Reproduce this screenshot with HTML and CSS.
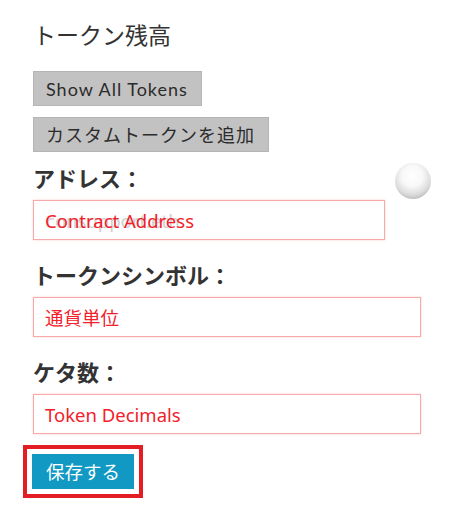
FILE: index.html
```html
<!DOCTYPE html>
<html lang="ja">
<head>
<meta charset="utf-8">
<title>トークン残高</title>
<link rel="stylesheet" href="styles.css">
</head>
<body>
<div class="page">
  <h1 class="title">トークン残高</h1>
  <div class="actions">
    <button class="btn-gray">Show All Tokens</button>
    <button class="btn-gray">カスタムトークンを追加</button>
  </div>
  <div class="knob"></div>
  <div class="field first">
    <label class="label">アドレス：</label>
    <div class="input narrow">
      <span class="ghost">consupport.eth</span>
      <span class="value">Contract Address</span>
    </div>
  </div>
  <div class="field">
    <label class="label">トークンシンボル：</label>
    <div class="input"><span class="value">通貨単位</span></div>
  </div>
  <div class="field">
    <label class="label">ケタ数：</label>
    <div class="input"><span class="value">Token Decimals</span></div>
  </div>
  <div class="highlight">
    <button class="btn-save">保存する</button>
  </div>
</div>
</body>
</html>
```

FILE: styles.css
```css
html, body {
  margin: 0;
  padding: 0;
  background: #ffffff;
}

.page {
  position: relative;
  padding: 19px 34px 15px 33px;
  font-family: "Noto Sans CJK JP", "Noto Sans", sans-serif;
  color: #333333;
}

.title {
  margin: 0;
  font-size: 23px;
  font-weight: 400;
  line-height: 30px;
  color: #333333;
}

.actions {
  margin-top: 22px;
  display: flex;
  flex-direction: column;
  align-items: flex-start;
  gap: 11px;
}

.btn-gray {
  font-family: "Lato", "Noto Sans CJK JP", sans-serif;
  font-size: 18px;
  letter-spacing: 1px;
  line-height: 24px;
  color: #2b2b2b;
  background: #c2c2c2;
  border: 1px solid #b5b5b5;
  padding: 5px 13px 4px 12px;
  margin: 0;
}

.knob {
  position: absolute;
  left: 395px;
  top: 163px;
  width: 36px;
  height: 36px;
  border-radius: 50%;
  background: radial-gradient(circle at 48% 36%, #ffffff 0%, #f8f8f8 35%, #dddddd 62%, #b4b4b4 84%, #8f8f8f 100%);
}

.field {
  margin-top: 19px;
}

.field.first {
  margin-top: 10px;
}

.label {
  display: block;
  font-size: 22px;
  font-weight: 700;
  line-height: 30px;
  color: #333333;
  margin-bottom: 8px;
}

.input {
  display: grid;
  align-items: center;
  height: 40px;
  box-sizing: border-box;
  border: 1px solid #f8aaaa;
  box-shadow: 0 0 2px rgba(250, 170, 170, 0.6);
  padding: 0 10px;
  font-family: "Noto Sans", "Noto Sans CJK JP", sans-serif;
  font-size: 18.5px;
}

.input.narrow {
  width: 352px;
}

.input .ghost,
.input .value {
  grid-area: 1 / 1;
  white-space: nowrap;
}

.input .ghost {
  color: #cfcfcf;
  padding-left: 2px;
}

.input .value {
  color: #f2202a;
  padding-left: 1px;
}

.highlight {
  display: inline-block;
  margin: 11px 0 0 -10px;
  border: 4px solid #e41d25;
  padding: 5px;
}

.btn-save {
  display: block;
  margin: 0;
  font-family: "Noto Sans CJK JP", sans-serif;
  font-size: 18.5px;
  line-height: 25px;
  color: #ffffff;
  background: #1199c4;
  border: none;
  padding: 5px 14px;
}
```
